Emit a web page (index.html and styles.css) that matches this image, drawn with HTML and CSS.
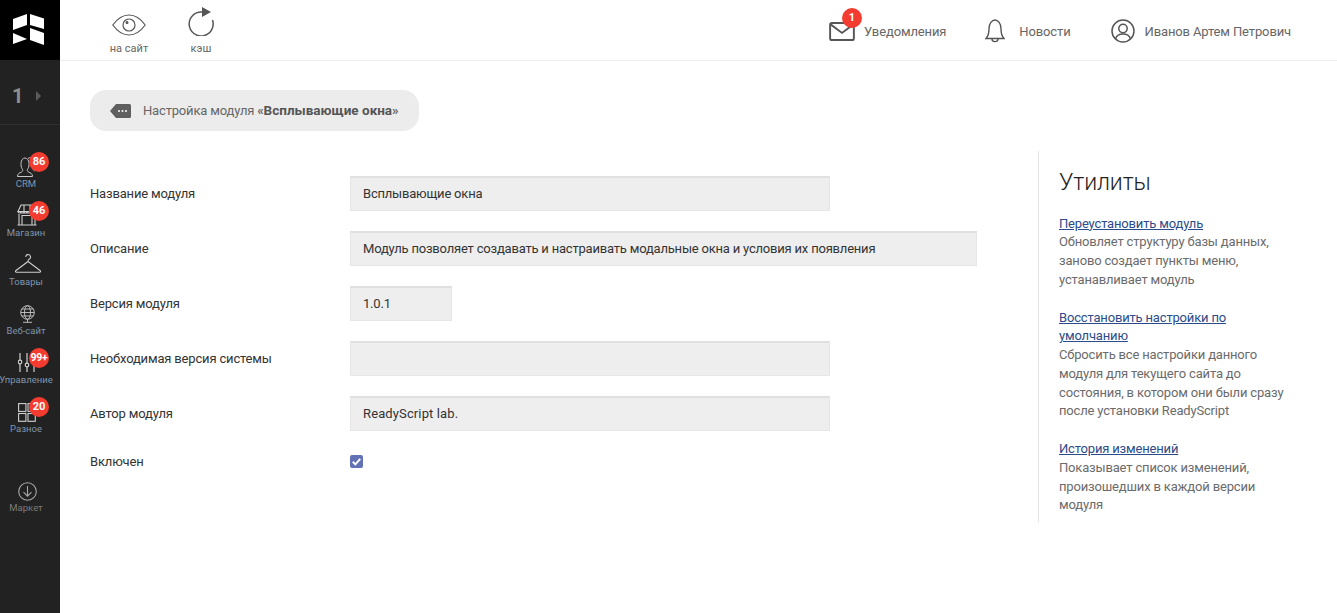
FILE: index.html
```html
<!DOCTYPE html>
<html lang="ru">
<head>
<meta charset="utf-8">
<title>Настройка модуля</title>
<link rel="stylesheet" href="styles.css">
</head>
<body>
<div class="app">
  <aside class="sidebar">
    <div class="logo">
      <svg width="31" height="31" viewBox="0 0 31 31" fill="#fff">
        <path d="M0 5 L14 0 V11 L0 16 Z"/><path d="M17 0 L31 4.500 V15 L17 11 Z"/>
        <path d="M0 19 L14 25 L0 30 Z"/><path d="M17 14 L31 19 V31 L17 26 Z"/>
      </svg>
    </div>
    <div class="site-switch"><span class="site-num">1</span><span class="site-arrow"></span></div>
    <nav class="menu">
      <a class="menu-item">
        <svg class="mi" width="20" height="20" viewBox="0 0 20 20" fill="none" stroke="#c8c8c8" stroke-width="1"><path d="M.5 19.500c0-3 2-3.500 4-4.500 1.500-.8 1.500-2 .5-3.500C4 10 4 8 4 6.500 4 3 6 1 8 1s4 2 4 5.500c0 1.500 0 3.500-1 5-1 1.500-1 2.700.5 3.500 2 1 4 1.500 4 4.500z"/><path d="M11 1.500c1-.8 2-1 3-1 2.500 0 4 2.500 4 5 0 2-.5 4-1.500 5.500-.8 1.200 0 2.500 1 3"/></svg>
        <span class="mt">CRM</span><b class="badge">86</b>
      </a>
      <a class="menu-item">
        <svg class="mi" width="20" height="22" viewBox="0 0 20 22" fill="none" stroke="#d0d0d0" stroke-width="1.100"><path d="M4 1h12l3 6.500H1z"/><path d="M1 7.500c0 2 3 2 3 0 0 2 3 2 3 0 0 2 3 2 3 0 0 2 3 2 3 0 0 2 3 2 3 0 0 2 3 2 3 0"/><path d="M2 10v11h16V10M5 21V11.500h10V21M.5 21h19M7 1v6M13 1v6"/></svg>
        <span class="mt">Магазин</span><b class="badge">46</b>
      </a>
      <a class="menu-item">
        <svg class="mi hanger" width="26" height="21" viewBox="0 0 26 21" fill="none" stroke="#d0d0d0" stroke-width="1.100"><path d="M10.700 3a2.400 2.400 0 1 1 3.300 2.200c-.7.300-1 .8-1 2.300L25 16.500c1 .8.600 1.800-.5 1.800h-23c-1.100 0-1.500-1-.5-1.800L13 7.500"/></svg>
        <span class="mt">Товары</span>
      </a>
      <a class="menu-item">
        <svg class="mi globe" width="17" height="18" viewBox="0 0 17 18" fill="none" stroke="#c8c8c8" stroke-width=".9"><circle cx="8.500" cy="7.500" r="6.800"/><ellipse cx="8.500" cy="7.500" rx="3" ry="6.800"/><path d="M1.700 7.500h13.600M2.700 4h11.600M2.700 11h11.600M4 17.300h9M8.500 14.300v3"/></svg>
        <span class="mt">Веб-сайт</span>
      </a>
      <a class="menu-item">
        <svg class="mi globe" width="18" height="19" viewBox="0 0 18 19" fill="none" stroke="#d0d0d0" stroke-width="1.200"><path d="M2 0v7M2 11v8M9 0v10M9 14v5M16 0v3M16 7v12"/><circle cx="2" cy="9" r="1.800"/><circle cx="9" cy="12" r="1.800"/><circle cx="16" cy="5" r="1.800"/></svg>
        <span class="mt">Управление</span><b class="badge wide">99+</b>
      </a>
      <a class="menu-item">
        <svg class="mi" width="18" height="19" viewBox="0 0 18 19" fill="none" stroke="#d0d0d0" stroke-width="1.100"><rect x=".6" y=".6" width="7.300" height="7.800"/><rect x="10" y=".6" width="7.300" height="7.800"/><rect x=".6" y="10.500" width="7.300" height="7.800"/><rect x="10" y="10.500" width="7.300" height="7.800"/></svg>
        <span class="mt">Разное</span><b class="badge">20</b>
      </a>
      <a class="menu-item market">
        <svg class="mi" width="19" height="19" viewBox="0 0 19 19" fill="none" stroke="#a8a8a8" stroke-width="1.100"><circle cx="9.500" cy="9.500" r="8.800"/><path d="M9.500 4v10M5.500 10.200l4 4 4-4"/></svg>
        <span class="mt">Маркет</span>
      </a>
    </nav>
  </aside>
  <div class="main">
    <header class="topbar">
      <div class="tools">
        <a class="tool">
          <svg width="34" height="22" viewBox="0 0 34 22" fill="none" stroke="#555" stroke-width="1.200"><path d="M.8 11C5.500 4.500 11 1 17 1s11.500 3.500 16.200 10C28.500 17.500 23 21 17 21S5.500 17.500.8 11z"/><circle cx="17" cy="11" r="6"/><circle cx="15" cy="8.500" r=".9" fill="#555"/></svg>
          <span>на сайт</span>
        </a>
        <a class="tool">
          <svg width="26" height="29" viewBox="0 0 26 29" fill="none" stroke="#555" stroke-width="1.500"><path d="M14 5A12 12 0 1 0 24.500 13"/><path d="M14 0v10l9-5z" fill="#555" stroke="none"/></svg>
          <span>кэш</span>
        </a>
      </div>
      <div class="top-links">
        <a class="top-link notify">
          <svg width="26" height="19" viewBox="0 0 27 20" fill="none" stroke="#555" stroke-width="2"><rect x="1" y="1" width="25" height="18" rx="2"/><path d="M1.500 2.500l12 9 12-9"/></svg>
          <b class="badge top-badge">1</b>
          <span>Уведомления</span>
        </a>
        <a class="top-link news">
          <svg width="20" height="24" viewBox="0 0 20 24" fill="none" stroke="#555" stroke-width="1.400"><path d="M1 19.500c2-2 3-4 3-10C4 4.500 7 1 10 1s6 3.500 6 8.500c0 6 1 8 3 10z"/><path d="M7 20c0 3.500 6 3.500 6 0"/></svg>
          <span>Новости</span>
        </a>
        <a class="top-link user">
          <svg width="24" height="24" viewBox="0 0 24 24" fill="none" stroke="#555" stroke-width="1.500"><circle cx="12" cy="12" r="11"/><circle cx="12" cy="9.500" r="4.200"/><path d="M4.500 20c1-4 4-5 7.500-5s6.500 1 7.500 5"/></svg>
          <span>Иванов Артем Петрович</span>
        </a>
      </div>
    </header>
    <div class="page">
      <div class="crumb">
        <svg width="21" height="14" viewBox="0 0 21 14"><path d="M6 0h13.500a1.500 1.500 0 0 1 1.500 1.500v11a1.500 1.500 0 0 1-1.500 1.500H6L0 7z" fill="#5f5f5f"/><g fill="#fff"><circle cx="9" cy="7" r="1"/><circle cx="12.500" cy="7" r="1"/><circle cx="16" cy="7" r="1"/></g></svg>
        <span class="crumb-text">Настройка модуля <span class="q">«</span><strong>Всплывающие окна</strong><span class="q">»</span></span>
      </div>
      <div class="content">
        <form class="form">
          <div class="row"><label>Название модуля</label><div class="field f480">Всплывающие окна</div></div>
          <div class="row"><label>Описание</label><div class="field f627">Модуль позволяет создавать и настраивать модальные окна и условия их появления</div></div>
          <div class="row"><label>Версия модуля</label><div class="field f102">1.0.1</div></div>
          <div class="row"><label>Необходимая версия системы</label><div class="field f480"></div></div>
          <div class="row"><label>Автор модуля</label><div class="field f480 latin">ReadyScript lab.</div></div>
          <div class="row check-row"><label>Включен</label><span class="check"><svg width="13" height="13" viewBox="0 0 13 13"><path d="M2.800 6.800l2.600 2.600 4.800-5.600" fill="none" stroke="#fff" stroke-width="2"/></svg></span></div>
        </form>
        <aside class="utils">
          <h2>Утилиты</h2>
          <div class="util"><a>Переустановить модуль</a><p>Обновляет структуру базы данных, заново создает пункты меню, устанавливает модуль</p></div>
          <div class="util"><a>Восстановить настройки по умолчанию</a><p>Сбросить все настройки данного модуля для текущего сайта до состояния, в котором они были сразу после установки ReadyScript</p></div>
          <div class="util"><a>История изменений</a><p>Показывает список изменений, произошедших в каждой версии модуля</p></div>
        </aside>
      </div>
    </div>
  </div>
</div>
</body>
</html>
```
FILE: styles.css
```css
* { box-sizing: border-box; }
html, body { margin: 0; height: 100%; }
body { font-family: Roboto, "Liberation Sans", sans-serif; font-size: 13px; letter-spacing: -.17px; color: #333; background: #fff; overflow: hidden; }
.app { display: flex; height: 613px; }

.sidebar { width: 60px; flex: none; background: #222; display: flex; flex-direction: column; }
.logo { height: 60px; background: #000; display: flex; align-items: center; justify-content: center; padding: 0 3px 1px 0; }
.site-switch { height: 65px; border-bottom: 1px solid #2f2f2f; display: flex; align-items: center; padding: 7px 0 0 12px; gap: 13px; }
.site-num { font-size: 20px; font-weight: 700; color: #8f8f8f; line-height: 1; }
.site-arrow { width: 0; height: 0; border-left: 5px solid #5a5a5a; border-top: 5px solid transparent; border-bottom: 5px solid transparent; }
.menu { display: flex; flex-direction: column; padding-top: 24px; }
.menu-item { position: relative; width: 54px; height: 49px; display: flex; flex-direction: column; align-items: center; justify-content: flex-end; padding-bottom: 8px; }
.mi { display: block; margin-bottom: 1px; flex: none; }
.mi.hanger { margin-left: 1px; }
.mi.globe { margin-bottom: 2px; }
.mt { font-size: 9.500px; letter-spacing: 0; line-height: 12px; color: #7f95ad; white-space: nowrap; margin-left: -2px; }
.badge { position: absolute; left: 29px; top: 3px; width: 20px; height: 20px; border-radius: 50%; background: #f33c2f; color: #fff; font-size: 11px; font-weight: 700; letter-spacing: 0; line-height: 20px; text-align: center; font-style: normal; }
.badge.wide { font-size: 10.500px; letter-spacing: -.2px; }
.market { margin-top: 30px; }
.market .mt { color: #7b7b7b; }

.main { flex: 1; min-width: 0; display: flex; flex-direction: column; }
.topbar { height: 61px; border-bottom: 1px solid #eee; display: flex; justify-content: space-between; align-items: center; padding: 0 46px 0 50px; }
.tools { display: flex; gap: 34px; align-items: flex-end; height: 60px; padding-bottom: 5px; }
.tool { width: 38px; display: flex; flex-direction: column; align-items: center; justify-content: flex-end; color: #666; font-size: 11px; letter-spacing: 0; line-height: 13px; white-space: nowrap; }
.tool svg { display: block; margin-bottom: 6px; }
.top-links { display: flex; gap: 40px; align-items: center; padding-top: 2px; letter-spacing: -.13px; }
.top-link { position: relative; display: flex; align-items: center; gap: 9px; color: #666; }
.top-link.notify { margin-right: -1px; }
.top-link.news { gap: 14px; }
.top-link.user { gap: 10px; }
.top-link svg { display: block; }
.top-badge { left: 13px; top: -14px; }

.page { flex: 1; padding: 29px 0 0 30px; }
.crumb { width: 329px; height: 41px; border-radius: 16px; background: #ececec; display: flex; align-items: center; padding-left: 20px; gap: 12px; color: #666; }
.crumb-text { padding-bottom: 1px; }
.crumb strong { font-weight: 700; font-size: 13.500px; letter-spacing: 0; color: #555; }
.q { font-weight: 700; font-size: 13px; }
.content { display: flex; margin-top: 20px; }
.form { width: 948px; flex: none; padding-top: 25px; }
.row { display: flex; align-items: center; height: 35px; margin-bottom: 20px; }
.row label { width: 260px; flex: none; color: #333; padding-bottom: 1px; }
.field { height: 35px; background: #eee; border: 1px solid #e6e6e6; border-top: 2px solid #e0e0e0; padding: 0 12px; line-height: 31px; letter-spacing: -.2px; color: #333; white-space: nowrap; }
.field.latin { letter-spacing: .12px; }
.f480 { width: 480px; }
.f627 { width: 627px; }
.f102 { width: 102px; }
.check-row { height: 13px; margin-top: 24px; }
.check { width: 13px; height: 13px; border-radius: 2px; background: #6272b5; display: block; }
.check svg { display: block; }

.utils { width: 262px; flex: none; height: 372px; border-left: 1px solid #e6e6e6; padding-left: 20px; color: #6b6b6b; }
.utils h2 { margin: 19px 0 18.600px; font-size: 23px; letter-spacing: -.1px; line-height: 26px; font-weight: 300; color: #222; }
.util { line-height: 18.750px; margin-bottom: 19px; width: 230px; }
.util a { display: block; color: #2c4b8a; text-decoration: underline; }
.util p { margin: 0; }
```
